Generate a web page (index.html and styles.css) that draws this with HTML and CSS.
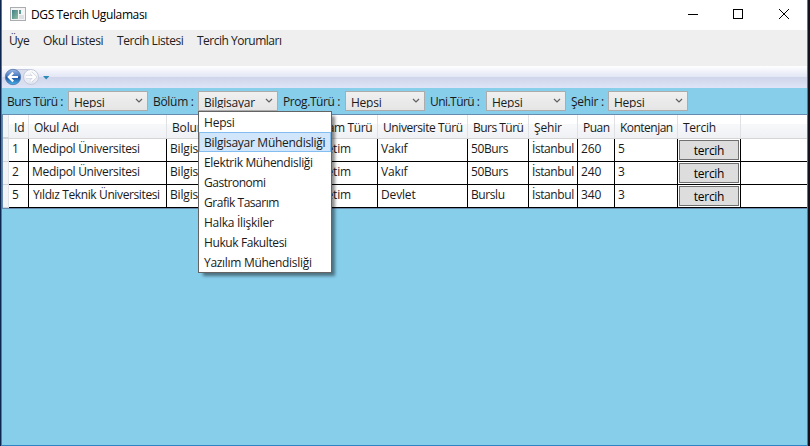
FILE: index.html
```
<!DOCTYPE html>
<html lang="tr">
<head>
<meta charset="utf-8">
<title>DGS Tercih Ugulaması</title>
<link rel="stylesheet" href="styles.css">
</head>
<body>
<div class="desktop">
<div class="window">
  <header class="titlebar">
    <svg class="app-icon" width="16" height="14" viewBox="0 0 16 14">
      <defs><linearGradient id="ai" x1="0" y1="0" x2="1" y2="1"><stop offset="0" stop-color="#3f7f86"/><stop offset="1" stop-color="#8fbf9f"/></linearGradient></defs>
      <rect x=".5" y=".5" width="15" height="13" fill="#f4f4f4" stroke="#a9adb0"/>
      <rect x="2" y="3" width="6" height="9" fill="url(#ai)"/>
      <rect x="9" y="3" width="2" height="4" fill="#5d9b95"/><rect x="9" y="8" width="5" height="4" fill="#dde1e3"/>
    </svg>
    <span class="title">DGS Tercih Ugulaması</span>
    <svg class="controls" width="103" height="12" viewBox="0 0 103 12" fill="none" stroke="#000" shape-rendering="crispEdges">
      <path d="M0 6.5H10M45.5 1.5h9v9h-9z"/><path d="M91 1l10 10M101 1l-10 10" shape-rendering="auto"/>
    </svg>
  </header>
  <nav class="menu">
    <span class="m1">Üye</span><span class="m2">Okul Listesi</span><span class="m3">Tercih Listesi</span><span class="m4">Tercih Yorumları</span>
  </nav>
  <div class="navbar">
    <svg width="48" height="20" viewBox="0 0 48 20">
      <defs>
        <linearGradient id="b" x1="0" y1="0" x2="0" y2="1"><stop offset="0" stop-color="#9dbbe6"/><stop offset=".45" stop-color="#4477bd"/><stop offset=".5" stop-color="#1c4e9b"/><stop offset="1" stop-color="#48b4ec"/></linearGradient>
        <linearGradient id="f" x1="0" y1="0" x2="0" y2="1"><stop offset="0" stop-color="#fff"/><stop offset="1" stop-color="#dfe4f2"/></linearGradient>
      </defs>
      <path d="M9 2.5H28a7.5 7.5 0 0 1 0 15H9z" fill="#d9deee"/>
      <path d="M10 2.5H27" stroke="#c3c8dc"/>
      <circle cx="10" cy="10" r="7.7" fill="url(#b)" stroke="#5474a9" stroke-width=".8"/>
      <path d="M15 10H6.5M10.2 5.6L5.8 10l4.4 4.4" fill="none" stroke="#fff" stroke-width="2.2"/>
      <circle cx="28" cy="10" r="7.5" fill="url(#f)" stroke="#c5cadb"/>
      <path d="M23 10h8.5M27.8 5.6l4.4 4.4-4.4 4.4" fill="none" stroke="#c9cdd9" stroke-width="3"/>
      <path d="M23 10h8.5M27.8 5.6l4.4 4.4-4.4 4.4" fill="none" stroke="#fff" stroke-width="2"/>
      <path d="M40 9h6.4l-3.2 3.6z" fill="#2a89b5"/>
    </svg>
  </div>
  <div class="filters">
    <label class="f1">Burs Türü :</label>
    <div class="combo"><span>Hepsi</span><svg width="8" height="6"><path d="M1 1l3 3 3-3" fill="none" stroke="#606060" stroke-width="1.2"/></svg></div>
    <label class="f2">Bölüm :</label>
    <div class="combo open"><span>Bilgisayar</span><svg width="8" height="6"><path d="M1 1l3 3 3-3" fill="none" stroke="#606060" stroke-width="1.2"/></svg>
      <ul class="popup">
        <li class="p1">Hepsi</li><li class="p2 selected">Bilgisayar Mühendisliği</li><li class="p3">Elektrik Mühendisliği</li><li class="p4">Gastronomi</li><li class="p5">Grafik Tasarım</li><li class="p6">Halka İlişkiler</li><li class="p7">Hukuk Fakultesi</li><li class="p8">Yazılım Mühendisliği</li>
      </ul>
    </div>
    <label class="f3">Prog.Türü :</label>
    <div class="combo"><span>Hepsi</span><svg width="8" height="6"><path d="M1 1l3 3 3-3" fill="none" stroke="#606060" stroke-width="1.2"/></svg></div>
    <label class="f4">Uni.Türü :</label>
    <div class="combo"><span>Hepsi</span><svg width="8" height="6"><path d="M1 1l3 3 3-3" fill="none" stroke="#606060" stroke-width="1.2"/></svg></div>
    <label class="f5">Şehir :</label>
    <div class="combo"><span>Hepsi</span><svg width="8" height="6"><path d="M1 1l3 3 3-3" fill="none" stroke="#606060" stroke-width="1.2"/></svg></div>
  </div>
  <div class="grid">
    <div class="row head"><i></i><b class="h1">Id</b><b class="h2">Okul Adı</b><b class="h3">Bolum</b><b class="h4">Program Türü</b><b class="h5">Universite Türü</b><b class="h6">Burs Türü</b><b class="h7">Şehir</b><b class="h8">Puan</b><b class="h9">Kontenjan</b><b class="h10">Tercih</b><b></b></div>
    <div class="row"><i></i><span>1</span><span class="c2">Medipol Üniversitesi</span><span>Bilgis</span><span class="c4">etim</span><span>Vakıf</span><span class="c6">50Burs</span><span class="c7">İstanbul</span><span>260</span><span>5</span><span class="act"><button>tercih</button></span><span class="rest"></span></div>
    <div class="row"><i></i><span>2</span><span class="c2">Medipol Üniversitesi</span><span>Bilgis</span><span class="c4">etim</span><span>Vakıf</span><span class="c6">50Burs</span><span class="c7">İstanbul</span><span>240</span><span>3</span><span class="act"><button>tercih</button></span><span class="rest"></span></div>
    <div class="row"><i></i><span>5</span><span class="c2 long">Yıldız Teknik Üniversitesi</span><span>Bilgis</span><span class="c4">etim</span><span>Devlet</span><span class="c6">Burslu</span><span class="c7">İstanbul</span><span>340</span><span>3</span><span class="act"><button>tercih</button></span><span class="rest"></span></div>
  </div>
</div>
</div>
</body>
</html>
```
FILE: styles.css
```
* { box-sizing: border-box; }
body { margin: 0; font: 12px/16px "Open Sans", "Noto Sans", sans-serif; letter-spacing: -0.15px; color: #1a1a1a; white-space: nowrap; overflow: hidden; }
.desktop { width: 810px; height: 446px; padding: 0 2px 0 1px; background: linear-gradient(90deg, #0c2650 50%, #10131d 50%); }
.window { height: 446px; display: flex; flex-direction: column; background: #87ceeb; border: solid #2f84c4; border-width: 0 1px 1px; }
.titlebar { height: 30px; background: #fff; display: flex; align-items: center; padding: 0 16px 2px 8px; color: #000; }
.title { margin-left: 5px; padding-top: 2px; letter-spacing: -0.38px; }
.controls { margin-left: auto; }
.menu { height: 36px; background: #efefef; display: flex; padding: 3px 0 0 7px; color: #212121; }
.m1 { width: 34px; letter-spacing: -0.4px; }
.m2 { width: 74px; letter-spacing: -0.3px; }
.m3 { width: 80px; letter-spacing: -0.42px; }
.m4 { letter-spacing: -0.5px; }
.navbar { height: 22px; padding: 1px 0 0 1px; background: linear-gradient(#fff, #e2e6f5 50%, #cfd5ea 51%, #dfe4f7); }
.navbar svg { display: block; }
.filters { height: 26px; display: flex; padding: 3px 0 0 5px; }
.filters label { padding-top: 3px; flex: none; }
.f1 { width: 61px; letter-spacing: -0.5px; }
.f2 { width: 45px; letter-spacing: -0.3px; }
.f3 { width: 62px; letter-spacing: -0.42px; }
.f4 { width: 56px; letter-spacing: -0.55px; }
.f5 { width: 37px; letter-spacing: -0.3px; }
.combo { position: relative; flex: none; width: 80px; height: 20px; margin-right: 5px; padding: 3px 4px 3px 5px; border: 1px solid #acacac; background: linear-gradient(#f0f0f0, #e5e5e5); display: flex; justify-content: space-between; }
.combo > span { width: 55px; height: 13px; overflow: hidden; letter-spacing: -0.25px; }
.combo > svg { margin-top: 3px; }
.popup { position: absolute; z-index: 2; left: -1px; top: 19px; width: 134px; height: 162px; margin: 0; padding: 0; list-style: none; background: #fff; border: 1px solid #646464; box-shadow: 4px 4px 3px -1px rgba(0,0,0,.45); }
.popup li { height: 20px; padding: 3px 5px 1px; }
.popup .selected { border: 1px solid #84bdf0; background: #d1e6fa; padding: 2px 4px 0; }
.p1 { letter-spacing: -0.2px; }
.p2 { letter-spacing: -0.28px; }
.p3 { letter-spacing: -0.33px; }
.p4, .p5 { letter-spacing: -0.47px; }
.p6 { letter-spacing: -0.28px; }
.p7 { letter-spacing: -0.4px; }
.p8 { letter-spacing: -0.3px; }
.grid { border: solid #688caf; border-width: 1px 0 1px 1px; background: #fff; }
.row { display: grid; grid-template-columns: 6px 20px 138px 127px 84px 90px 61px 49px 37px 63px 63px 1fr; height: 23px; }
.row > i { background: #f3f4f5; border-right: 1px solid #dfe3e8; border-bottom: 1px solid #cfd4da; }
.row > span { padding: 2px 3px; border: solid #000; border-width: 0 1px 1px 0; }
.row > .c2 { letter-spacing: -0.31px; }
.row > .long { padding-left: 4px; letter-spacing: -0.38px; }
.row > .c4 { text-align: right; padding-right: 26px; }
.row > .c6, .row > .c7 { letter-spacing: -0.42px; }
.row > .act { padding: 1px; }
.row > .rest { border-right: 0; }
.head { background: linear-gradient(#fff 40%, #f7f8fa 41%, #f0f1f4); border-bottom: 1px solid #d5d5d5; height: 24px; }
.head b { font-weight: 400; padding: 5px 5px 0; border-right: 1px solid #dfe1e5; }
.head b:last-child { border: 0; }
.head .h2, .head .h10 { letter-spacing: -0.28px; }
.head .h4 { letter-spacing: -0.4px; }
.head .h5 { letter-spacing: -0.42px; }
.head .h6, .head .h8, .head .h9 { letter-spacing: -0.52px; }
button { display: block; width: 60px; height: 20px; padding: 1px 0 0; font: inherit; letter-spacing: -0.3px; color: #000; background: #ddd; border: 1px solid #707070; }
```
